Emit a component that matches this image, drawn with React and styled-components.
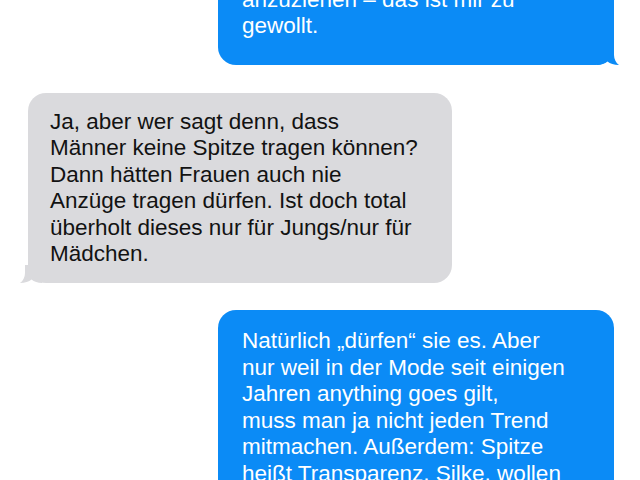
import React from 'react'
import styled, { createGlobalStyle } from 'styled-components'

const GlobalStyle = createGlobalStyle`
  html, body {
    margin: 0;
    padding: 0;
    background: #ffffff;
    overflow: hidden;
  }
  body {
    font-family: "Liberation Sans", Arial, Helvetica, sans-serif;
  }
`

const BLUE = '#0b8bf6'
const GREY = '#dadadd'

const Thread = styled.div`
  display: flex;
  flex-direction: column;
  gap: 27.5px;
  width: 640px;
  box-sizing: border-box;
  padding: 0 26px 0 28px;
  margin-top: -31.5px;
`

const Row = styled.div`
  display: flex;
  flex-shrink: 0;
  justify-content: ${(p) => (p.$mine ? 'flex-end' : 'flex-start')};
`

const Bubble = styled.div`
  position: relative;
  box-sizing: border-box;
  width: ${(p) => p.$width}px;
  padding: ${(p) => p.$padTop}px 18px ${(p) => p.$padBottom}px ${(p) => (p.$mine ? 24 : 22)}px;
  border-radius: 18px;
  background: ${(p) => (p.$mine ? BLUE : GREY)};
  color: ${(p) => (p.$mine ? '#ffffff' : '#121212')};
  font-size: 22.5px;
  line-height: 26.5px;
  white-space: nowrap;
`

const Tail = styled.svg`
  position: absolute;
  bottom: 0;
  ${(p) => (p.$mine ? 'right: -5px;' : 'left: -8px;')}
  width: 22px;
  height: 18px;
  fill: ${(p) => (p.$mine ? BLUE : GREY)};
`

function BubbleTail({ mine }) {
  return mine ? (
    <Tail $mine viewBox="0 0 22 18">
      <path d="M0 0 H17 V8 C17 12 19 16 22 18 C17 18 13 16.5 10.5 14.5 C8 16.5 4 18 0 18 Z" />
    </Tail>
  ) : (
    <Tail viewBox="0 0 22 18">
      <path d="M22 0 H5 V8 C5 12 3 16 0 18 C5 18 9 16.5 11.5 14.5 C14 16.5 18 18 22 18 Z" />
    </Tail>
  )
}

const Line = styled.span`
  display: block;
`

const messages = [
  {
    mine: true,
    width: 396,
    padTop: 18,
    padBottom: 25.5,
    lines: ['anzuziehen – das ist mir zu', 'gewollt.'],
  },
  {
    mine: false,
    width: 424,
    padTop: 16,
    padBottom: 15,
    lines: [
      'Ja, aber wer sagt denn, dass',
      'Männer keine Spitze tragen können?',
      'Dann hätten Frauen auch nie',
      'Anzüge tragen dürfen. Ist doch total',
      'überholt dieses nur für Jungs/nur für',
      'Mädchen.',
    ],
  },
  {
    mine: true,
    width: 396,
    padTop: 18,
    padBottom: 16,
    lines: [
      'Natürlich „dürfen“ sie es. Aber',
      'nur weil in der Mode seit einigen',
      'Jahren anything goes gilt,',
      'muss man ja nicht jeden Trend',
      'mitmachen. Außerdem: Spitze',
      'heißt Transparenz, Silke, wollen',
      'wir das wirklich sehen?',
    ],
  },
]

export default function App() {
  return (
    <>
      <GlobalStyle />
      <Thread>
        {messages.map((m, i) => (
          <Row key={i} $mine={m.mine}>
            <Bubble
              $mine={m.mine}
              $width={m.width}
              $padTop={m.padTop}
              $padBottom={m.padBottom}
            >
              {m.lines.map((l, j) => (
                <Line key={j}>{l}</Line>
              ))}
              <BubbleTail mine={m.mine} />
            </Bubble>
          </Row>
        ))}
      </Thread>
    </>
  )
}
